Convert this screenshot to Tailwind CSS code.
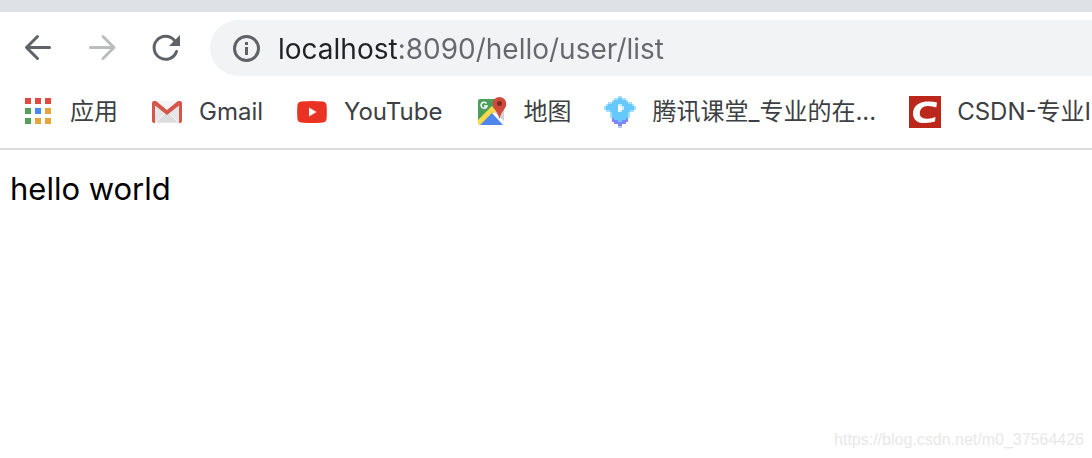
<!DOCTYPE html>
<html lang="zh-CN">
<head>
    <meta charset="UTF-8">
    <meta name="viewport" content="width=device-width, initial-scale=1.0">
    <title>localhost:8090/hello/user/list</title>
    <script src="https://cdn.jsdelivr.net/npm/@tailwindcss/browser@4"></script>
</head>
<body class="min-h-screen flex flex-col bg-white font-[Inter,'Noto_Sans_CJK_SC',sans-serif]">
    <header class="border-t-12 border-[#dee1e6]">
        <div class="flex items-center pt-2 pl-[22px]">
            <nav class="flex shrink-0 gap-8 mr-7">
                <button type="button" aria-label="后退" class="size-8">
                    <svg class="size-8" viewBox="0 0 32 32" fill="none" stroke="#5f6368" stroke-width="3" stroke-linecap="round" stroke-linejoin="round"><path d="M27.500 15.500H5M15.500 4.500L4.500 15.500L15.500 26.500"/></svg>
                </button>
                <button type="button" aria-label="前进" class="size-8" disabled>
                    <svg class="size-8" viewBox="0 0 32 32" fill="none" stroke="#babcbe" stroke-width="3" stroke-linecap="round" stroke-linejoin="round"><path d="M4.500 15.500H27M17 4.500L28 15.500L17 26.500"/></svg>
                </button>
                <button type="button" aria-label="重新加载" class="size-8">
                    <svg class="size-8" viewBox="0 0 32 32" fill="none"><path d="M26.500 19.500A11.500 11.500 0 1 1 24.500 8.500" stroke="#5f6368" stroke-width="3" stroke-linecap="round"/><path d="M30 3v11H19z" fill="#5f6368"/></svg>
                </button>
            </nav>
            <div class="flex flex-1 items-center h-14 pl-5 gap-4 bg-[#f1f3f4] rounded-l-full">
                <button type="button" aria-label="查看网站信息" class="size-8 shrink-0">
                    <svg class="size-8" viewBox="0 0 32 32"><circle cx="16.500" cy="16.500" r="12" fill="none" stroke="#5f6368" stroke-width="3"/><path d="M15 10h3v3h-3zM15 15h3v8h-3z" fill="#5f6368"/></svg>
                </button>
                <!-- host is darker than the rest of the address -->
                <input id="address" type="text" aria-label="地址" value="localhost:8090/hello/user/list" spellcheck="false" class="flex-1 min-w-0 h-14 pt-0.5 text-[28px] outline-none text-transparent bg-clip-text bg-[linear-gradient(to_right,#202124_120px,#65686c_120px)]">
            </div>
        </div>
        <nav class="flex items-center h-[74px] pl-[22px] gap-[33px] border-b-2 border-[#dadce0] text-2xl text-[#3c4043] whitespace-nowrap overflow-hidden">
            <a href="#" class="flex items-center shrink-0 gap-4">
                <svg class="size-8" viewBox="0 0 32 32"><path fill="#e34a3f" d="M3 2h6v6H3zM13 2h6v6h-6zM23 2h6v6h-6z"/><path fill="#559d5b" d="M3 12h6v6H3zM3 22h6v6H3z"/><path fill="#4489f0" d="M13 12h6v6h-6z"/><path fill="#e6a537" d="M23 12h6v6h-6zM13 22h6v6h-6zM23 22h6v6h-6z"/></svg>
                应用
            </a>
            <a href="#" class="flex items-center shrink-0 gap-4">
                <svg class="size-8" viewBox="0 0 32 32"><path fill="#e6e6e6" d="M3 5h26v22H3z"/><path fill="#dcdcdc" d="M5 26l11-10 11 10z"/><path d="M5 26l8-8M27 26l-8-8" stroke="#f8f8f8"/><path fill="#f4f4f4" d="M5 5h22L16 15z"/><path fill="#d5564a" d="M1 7q0-2 2-2h2l11 9 11-9h2q2 0 2 2v18q0 2-2 2h-1V9.500L16 19 4 9.500V27H3q-2 0-2-2z"/></svg>
                Gmail
            </a>
            <a href="#" class="flex items-center shrink-0 gap-4">
                <svg class="size-8" viewBox="0 0 32 32"><path fill="#ea3323" d="M5 5.500Q16 4.500 27 5.500Q30.500 6 30.700 10Q31 16 30.700 22Q30.500 26 27 26.500Q16 27.500 5 26.500Q1.500 26 1.300 22Q1 16 1.300 10Q1.500 6 5 5.500z"/><path fill="#fff" d="M13 11.500v9l7.500-4.500z"/></svg>
                YouTube
            </a>
            <a href="#" class="flex items-center shrink-0 gap-4">
                <svg class="size-8" viewBox="0 0 32 32"><path fill="#4b9f58" d="M5 3h22v13L17 15 3 27V5q0-2 2-2z"/><path fill="#d2d2d4" d="M17 15l10-6q2 0 2 2v15q0 2-2 2z"/><path fill="#fff" d="M15 17l3-2 11 10v2l-2 2z"/><path fill="#f9d949" d="M3 24L17 10l4 5L5 29q-2 0-2-2z"/><path fill="#4f86ec" d="M5 29l12-12 11 12z"/><path fill="none" stroke="#fff" stroke-width="1.500" d="M11.500 7.500A3 3 0 1 0 12 10H9"/><path fill="#d1493b" d="M24.500 1A6.800 6.800 0 0 1 31.300 8C31.300 13 26 15 24.500 23C23 15 17.700 13 17.700 8A6.800 6.800 0 0 1 24.500 1z"/><circle cx="24.500" cy="7.500" r="2.500" fill="#7a2a22"/></svg>
                地图
            </a>
            <a href="#" class="flex items-center shrink-0 gap-4">
                <svg class="size-8" viewBox="0 0 32 32" shape-rendering="crispEdges"><path fill="#a6dffd" d="M14 0h4v2h4v2h2v2h4v2h2v2h2v4h-2v2h-4v6H6v-6H2v-2H0v-4h2V8h2V6h4V4h2V2h4z"/><path fill="#7e86fa" d="M8 20h16v6h-2v2h-4v2h-4v-2h-4v-2H8z"/><path fill="#bfc3fd" d="M14 30h4v2h-4z"/><path fill="#67c8fb" d="M14 2h4v2h4v2h2v2h4v2h2v4h-4v2h-2v6h-2v2h-4v2h-4v-2h-4v-2H8v-6H6v-2H2v-4h2V8h4V6h2V4h4z"/><path fill="#c8ecfe" d="M14 8h4v2h2v4h-2v2h-4z"/><path fill="#fff" d="M14 10h2v1h2v3h-2v2h-2z"/></svg>
                腾讯课堂_专业的在...
            </a>
            <a href="#" class="flex items-center shrink-0 gap-4">
                <svg class="size-8" viewBox="0 0 32 32"><path fill="#bb271a" d="M0 0h32v32H0z"/><path fill="#fff" d="M28 6.500Q23 5 17 5.500C9 6.200 4 11 4 17.500C4 24 9 27.500 16 27Q22 26.800 26 25.500L26.500 21Q22 23 17.500 22.700C13 22.500 10.500 20.500 10.800 17C11 13 14 10.200 18.500 10Q23 9.800 27.300 11.500z"/></svg>
                CSDN-专业IT
            </a>
        </nav>
    </header>
    <main class="flex-1 px-2.5 pt-4 text-[31px] leading-[46px] text-black">
        <p>hello world</p>
    </main>
    <footer class="px-2 pb-1 text-right text-base leading-7 text-[#e8e8e8] font-['Liberation_Sans',sans-serif]">https://blog.csdn.net/m0_37564426</footer>
</body>
</html>
